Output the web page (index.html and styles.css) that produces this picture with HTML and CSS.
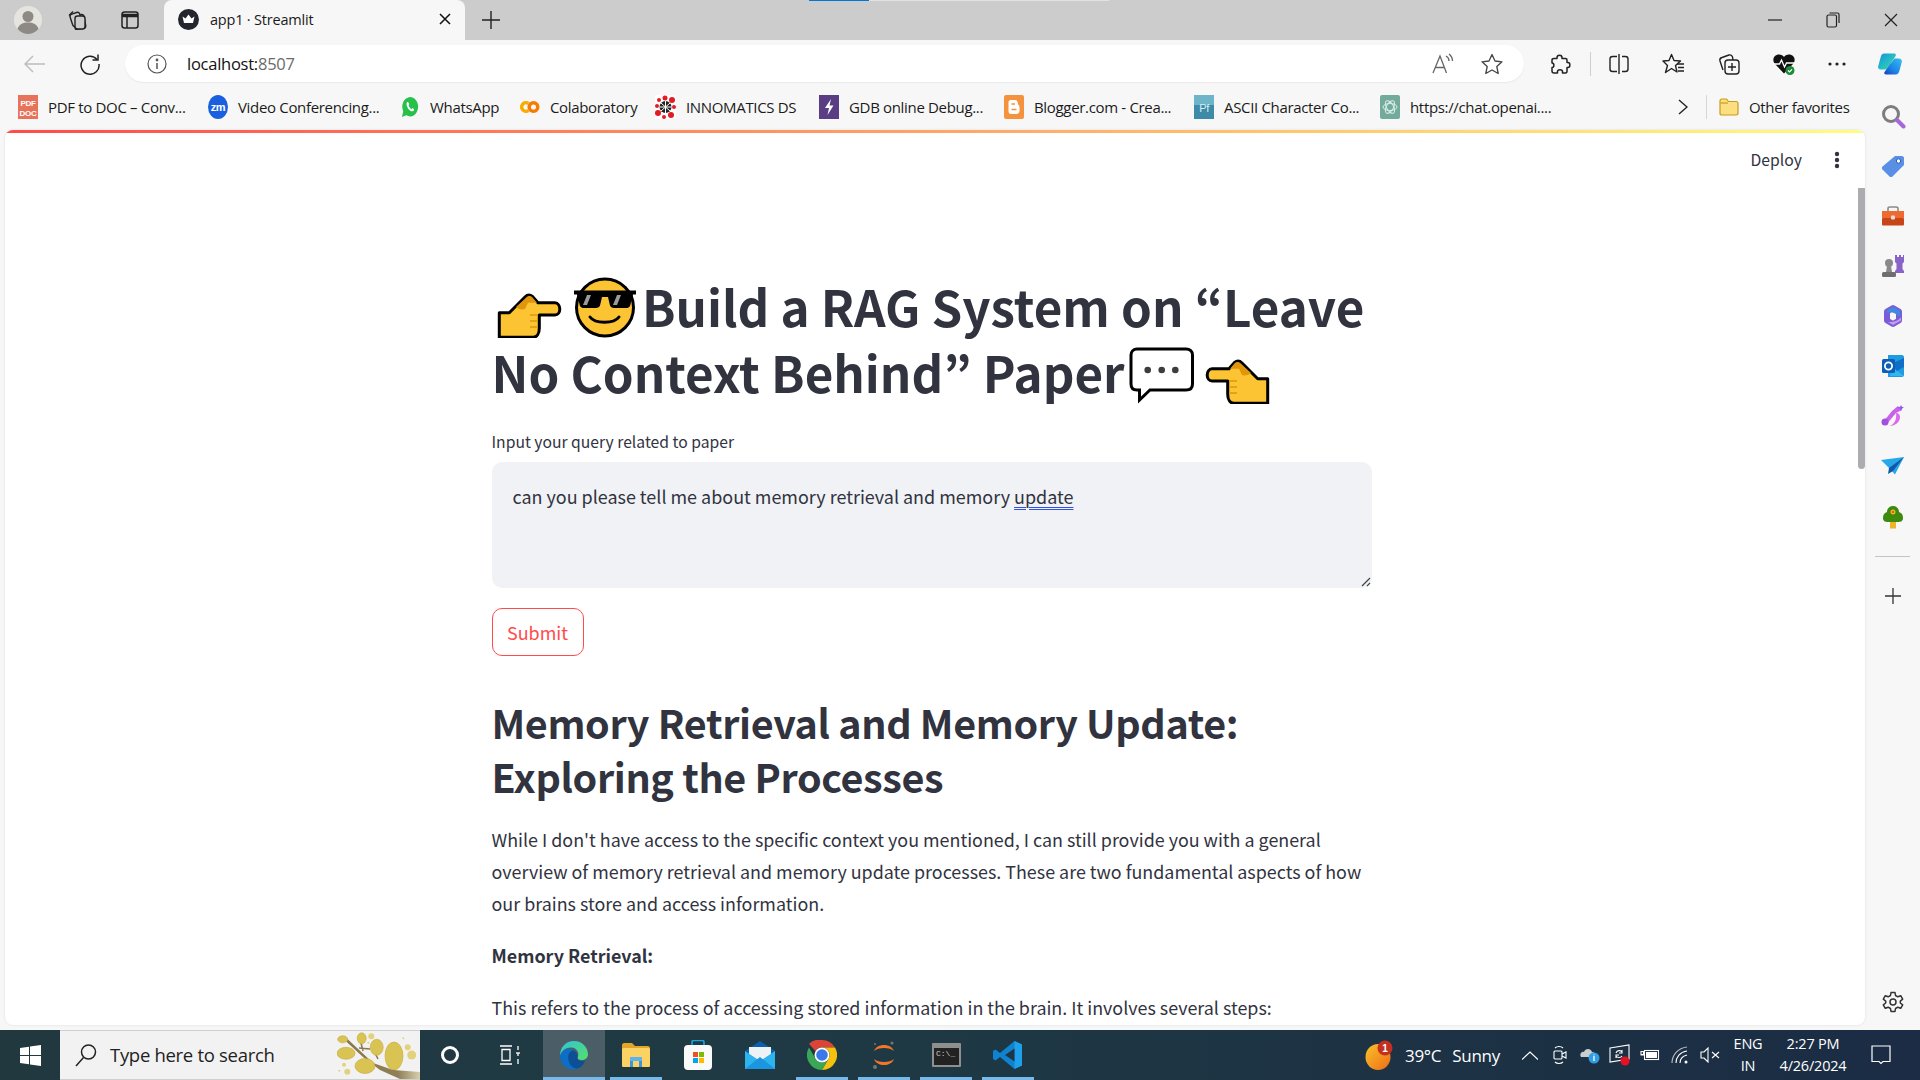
FILE: index.html
```html
<!DOCTYPE html>
<html lang="en">
<head>
<meta charset="utf-8">
<title>app1 · Streamlit</title>
<link rel="stylesheet" href="styles.css">
</head>
<body>
<svg class="defs" width="0" height="0">
  <defs>
    <linearGradient id="copA" x1="0" y1="0" x2="1" y2="1"><stop offset="0" stop-color="#1c8fe0"/><stop offset=".45" stop-color="#20b8c8"/><stop offset="1" stop-color="#48dc98"/></linearGradient>
    <linearGradient id="copB" x1="1" y1="0" x2="0" y2="1"><stop offset="0" stop-color="#38bdf2"/><stop offset=".6" stop-color="#1a84e6"/><stop offset="1" stop-color="#1a3fc0"/></linearGradient>
    <linearGradient id="edgeA" x1="0" y1="0" x2="1" y2="1"><stop offset="0" stop-color="#34c3d8"/><stop offset="1" stop-color="#54e06a"/></linearGradient>
    <linearGradient id="wthr" x1="0" y1="0" x2="1" y2="1"><stop offset="0" stop-color="#f9c22a"/><stop offset="1" stop-color="#ef6c17"/></linearGradient>
    <linearGradient id="brush" x1="0" y1="0" x2="1" y2="1"><stop offset="0" stop-color="#b25ae8"/><stop offset="1" stop-color="#e26bf0"/></linearGradient>
    <linearGradient id="twig" x1="0" y1="0" x2="1" y2="0"><stop offset="0" stop-color="#8a7648"/><stop offset=".7" stop-color="#8f8058"/><stop offset="1" stop-color="#d6cfae"/></linearGradient>
    <g id="handR">
      <path d="M7.3 61.3V36.7H17.3L33 21C35 19 38 18.500 40.500 20.500L46 26.700H63C66 26.700 67.800 30 67.800 33C67.800 36 66 39 63 39H47.300V52.300C47.300 57.500 45 61.300 41 61.300Z" fill="#fcc332" stroke="#000" stroke-width="3" stroke-linejoin="round"/>
      <path d="M24 31L35 21C37 19.500 39 20 40.500 21.500L45 26.700H36L33 33C30 34 26 33 24 31Z" fill="#e0960c"/>
      <path d="M38 39H46M38 45H46M38 51H45" stroke="#e0960c" stroke-width="1.600" fill="none"/>
    </g>
  </defs>
</svg>

<header class="tabstrip">
  <span class="prof">
    <svg width="28" height="28" viewBox="0 0 28 28"><circle cx="14" cy="14" r="14" fill="#e6e4de"/><circle cx="14" cy="10.500" r="5.500" fill="#8d8a85"/><path d="M3.500 23C5 18 9 16.500 14 16.500S23 18 24.500 23C21.500 26.500 18 28 14 28S6.500 26.500 3.500 23Z" fill="#8d8a85"/></svg>
  </span>
  <span class="strip-btn">
    <svg width="22" height="22" viewBox="0 0 22 22" fill="none" stroke="#222" stroke-width="1.400"><rect x="8" y="6" width="11" height="14" rx="2.500" transform="rotate(-10 13 13)" fill="#ccc"/><rect x="5" y="4" width="10" height="13" rx="2.500" transform="rotate(-18 10 10)" fill="#ccc"/><path d="M3 6.500L7 2.500" /><rect x="9" y="7" width="10" height="13" rx="2.500" fill="#ccc"/></svg>
  </span>
  <span class="strip-btn">
    <svg width="20" height="20" viewBox="0 0 20 20" fill="none" stroke="#222" stroke-width="1.500"><rect x="2" y="2" width="16" height="16" rx="2.500"/><path d="M2 5.500H18" stroke-width="3.500"/><path d="M7 6V18"/></svg>
  </span>
  <div class="tab">
    <svg class="fav" width="21" height="21" viewBox="0 0 21 21"><circle cx="10.500" cy="10.500" r="10.500" fill="#23252f"/><path d="M4.500 7.500L7.500 9.500L10.500 5.500L13.500 9.500L16.500 7.500L15 14H6Z" fill="#fff"/></svg>
    <span class="tab-title">app1 · Streamlit</span>
    <svg class="tab-x" width="12" height="12" viewBox="0 0 12 12" stroke="#111" stroke-width="1.500"><path d="M1 1L11 11M11 1L1 11"/></svg>
  </div>
  <span class="newtab">
    <svg width="18" height="18" viewBox="0 0 18 18" stroke="#222" stroke-width="1.400"><path d="M9 0V18M0 9H18"/></svg>
  </span>
  <div class="loadbar"><i class="load-a"></i><i class="load-b"></i></div>
  <div class="winbtns">
    <svg width="14" height="14" viewBox="0 0 14 14" stroke="#222" stroke-width="1.200"><path d="M0 7H14"/></svg>
    <svg width="14" height="16" viewBox="0 0 14 16" fill="none" stroke="#222" stroke-width="1.200"><rect x="1" y="3" width="9.500" height="12" rx="1.500"/><path d="M3.500 1H11.500C12.500 1 13 1.500 13 2.500V11"/></svg>
    <svg width="14" height="14" viewBox="0 0 14 14" stroke="#222" stroke-width="1.200"><path d="M1 1L13 13M13 1L1 13"/></svg>
  </div>
</header>

<nav class="toolbar">
  <span class="tb">
    <svg width="22" height="18" viewBox="0 0 22 18" fill="none" stroke="#bdbdbd" stroke-width="1.500"><path d="M21 9H1M9 1L1 9L9 17"/></svg>
  </span>
  <span class="tb">
    <svg width="22" height="22" viewBox="0 0 22 22" fill="none" stroke="#222" stroke-width="1.500"><path d="M18 6.500A9 9 0 1 0 20 11"/><path d="M19 1.500V7H13.500"/></svg>
  </span>
  <div class="addr">
    <svg width="20" height="20" viewBox="0 0 20 20" fill="none" stroke="#555" stroke-width="1.200"><circle cx="10" cy="10" r="9"/><path d="M10 9V15" stroke-width="1.500"/><circle cx="10" cy="6" r=".8" fill="#555"/></svg>
    <span class="url"><b class="host">localhost:</b>8507</span>
    <svg class="read" width="24" height="22" viewBox="0 0 24 22" fill="none" stroke="#666" stroke-width="1.300"><path d="M1 20L8 3L14.500 20M3.500 14.500H12.500"/><path d="M14 3C16 4 17 6 17 8M17 1C19.500 3 20.500 5 20.500 8"/></svg>
    <svg class="star" width="22" height="22" viewBox="0 0 22 22" fill="none" stroke="#444" stroke-width="1.300" stroke-linejoin="round"><path d="M11 1.500L14 8L21 8.800L15.800 13.500L17.200 20.500L11 17L4.800 20.500L6.200 13.500L1 8.800L8 8Z"/></svg>
  </div>
  <div class="tools">
    <span class="ti">
      <svg width="22" height="22" viewBox="0 0 22 22" fill="none" stroke="#222" stroke-width="1.500" stroke-linejoin="round"><path d="M8 4.500C8 1.500 13 1.500 13 4.500V5.500H16.500C17.500 5.500 18 6 18 7V9.500H19C21.500 9.500 21.500 14.500 19 14.500H18V18C18 19 17.500 20 16.500 20H13.500V18.500C13.500 16 8.500 16 8.500 18.500V20H5C3.500 20 3 19 3 18V14.500C5.500 14.500 5.500 10 3 10V7C3 6 3.500 5.500 5 5.500H8Z"/></svg>
    </span>
    <i class="vsep"></i>
    <span class="ti">
      <svg width="22" height="22" viewBox="0 0 22 22" fill="none" stroke="#222" stroke-width="1.400"><path d="M9 3.500H4.500C3 3.500 2 4.500 2 6V16C2 17.500 3 18.500 4.500 18.500H9M14 3.500H17.500C19 3.500 20 4.500 20 6V16C20 17.500 19 18.500 17.500 18.500H14M11 1V21"/></svg>
    </span>
    <span class="ti">
      <svg width="24" height="22" viewBox="0 0 24 22" fill="none" stroke="#222" stroke-width="1.400" stroke-linejoin="round"><path d="M9.500 1.500L12 7.500L18.500 8L13.500 12.500L15 19L9.500 15.500L3.500 19.500L5.500 12.500L1 8L7 7.500Z"/><path d="M15 11H22M16 14.500H22M16 18H22"/></svg>
    </span>
    <span class="ti">
      <svg width="24" height="24" viewBox="0 0 24 24" fill="none" stroke="#222" stroke-width="1.400"><path d="M6 18L3 9C2.500 7 3 6 5 5.500L12 3C14 2.500 15 3 15.500 5L16 8"/><rect x="8" y="8" width="14" height="14" rx="3"/><path d="M15 11V19M11 15H19"/></svg>
    </span>
    <span class="ti">
      <svg width="24" height="24" viewBox="0 0 24 24"><path d="M12 21.500L3 12C-.500 8 2 2.500 7 2.500C9.500 2.500 11 3.500 12 5C13 3.500 14.500 2.500 17 2.500C22 2.500 24.500 8 21 12Z" fill="#111"/><path d="M1 12H7.500L9.500 8L12.500 15L14.500 11H23" fill="none" stroke="#fff" stroke-width="1.300"/><circle cx="18" cy="18.500" r="4.500" fill="#1d8a3a"/><path d="M16 18.500L17.500 20L20 17.300" stroke="#fff" fill="none" stroke-width="1.200"/></svg>
    </span>
    <span class="ti ti-tight">
      <svg width="20" height="4" viewBox="0 0 20 4" fill="#222"><circle cx="3" cy="2" r="1.600"/><circle cx="10" cy="2" r="1.600"/><circle cx="17" cy="2" r="1.600"/></svg>
    </span>
    <span class="ti ti-tight">
      <svg width="30" height="28" viewBox="0 0 30 28"><path d="M7.500 1H20C22 1 22.800 2.300 22 4L15.500 14C13.500 17 11.500 20 9.500 21H3C.7 21 -.3 19 .3 16.500L3.300 5.500C4 2.500 5.500 1 7.500 1Z" fill="url(#copA)"/><path d="M26 7C28.500 7 30.300 9 29.700 11.500L26.800 22.500C26 25.500 24.500 27 22.500 27H10C8 27 7.200 25.500 8.200 24L14.500 15C17 12 19 9 20.500 7Z" fill="url(#copB)"/></svg>
    </span>
  </div>
</nav>

<nav class="bookmarks">
  <a class="bm"><svg width="20" height="24" viewBox="0 0 20 24"><rect width="20" height="24" fill="#e8735a"/><text x="10" y="10.500" class="ico-t">PDF</text><text x="10" y="20.500" class="ico-t">DOC</text></svg><span>PDF to DOC – Conv...</span></a>
  <a class="bm"><svg width="20" height="24" viewBox="0 0 20 24"><ellipse cx="10" cy="12" rx="10" ry="12" fill="#1a5fe0"/><text x="10" y="15.500" class="ico-z">zm</text></svg><span>Video Conferencing...</span></a>
  <a class="bm bm-wa"><svg width="18" height="22" viewBox="0 0 20 20" preserveAspectRatio="none"><path d="M1 19L2.500 14A8.800 8.800 0 1 1 6 17.500Z" fill="#27c04a"/><path d="M7 5.500C5.500 6.500 6 9 8 11.500C10 13.500 12.500 14.500 14 13.500C15 12.500 14.500 12 13 11C12.500 11 12 12 11.500 12C10.500 11.500 8.500 9.500 8.500 8.500C8.500 8 9.500 7.500 9 7C8 5.500 7.800 5.200 7 5.500Z" fill="#fff"/></svg><span>WhatsApp</span></a>
  <a class="bm"><svg width="20" height="20" viewBox="0 0 20 20" fill="none" stroke-width="3.500"><path d="M8.500 6.500A4.300 4.300 0 1 0 8.500 13.500" stroke="#f9ab00"/><circle cx="13.500" cy="10" r="4.300" stroke="#f57c00"/></svg><span>Colaboratory</span></a>
  <a class="bm"><svg width="21" height="24" viewBox="0 0 21 24"><rect width="21" height="24" fill="#fff"/><g fill="#e31b23"><circle cx="10" cy="3" r="2.500"/><circle cx="17" cy="5" r="3"/><circle cx="19" cy="12" r="2"/><circle cx="16" cy="20" r="3"/><circle cx="9" cy="22" r="2"/><circle cx="3" cy="18" r="3"/><circle cx="2" cy="11" r="2"/><circle cx="4" cy="5" r="2"/></g><circle cx="10.500" cy="12" r="6" fill="#222"/><path d="M10.500 6V18M4.500 12H16.500M6 8L15 16M15 8L6 16" stroke="#fff" stroke-width="1"/></svg><span>INNOMATICS DS</span></a>
  <a class="bm"><svg width="20" height="24" viewBox="0 0 20 24"><rect width="20" height="24" fill="#5a3d82"/><path d="M12 4L6 13H10L8.500 20L14.500 10.500H10.500Z" fill="#fff"/></svg><span>GDB online Debug...</span></a>
  <a class="bm"><svg width="20" height="24" viewBox="0 0 20 24"><rect width="20" height="24" rx="2" fill="#f5923e"/><path d="M6.500 5H11C13 5 14 6.500 14 9.500C15 10 15.500 11 15.500 12.500V16C15.500 18 14 19 12.500 19H7C5.500 19 4.500 18 4.500 16V7C4.500 6 5.500 5 6.500 5Z" fill="#fff"/><path d="M7.500 9H11M7.500 14.500H12.500" stroke="#f5923e" stroke-width="1.600"/></svg><span>Blogger.com - Crea...</span></a>
  <a class="bm"><svg width="20" height="24" viewBox="0 0 20 24"><rect width="20" height="24" fill="#3d8ba8"/><rect width="20" height="10" fill="#6fb5c9"/><text x="10" y="17" class="ico-p">Pf</text></svg><span>ASCII Character Co...</span></a>
  <a class="bm"><svg width="20" height="24" viewBox="0 0 20 24" fill="none" stroke="#d9eee6" stroke-width="1"><rect width="20" height="24" rx="2" fill="#74aa9c" stroke="none"/><ellipse cx="10" cy="12" rx="7" ry="3.500"/><ellipse cx="10" cy="12" rx="7" ry="3.500" transform="rotate(60 10 12)"/><ellipse cx="10" cy="12" rx="7" ry="3.500" transform="rotate(120 10 12)"/></svg><span>https://chat.openai....</span></a>
  <span class="bm-more"><svg width="10" height="16" viewBox="0 0 10 16" fill="none" stroke="#222" stroke-width="1.400"><path d="M1 1L9 8L1 15"/></svg></span>
  <i class="bm-sep"></i>
  <a class="bm bm-folder"><svg width="20" height="18" viewBox="0 0 20 18"><path d="M1 3C1 2 1.500 1 3 1H7.500L9.500 3.500H17C18.500 3.500 19 4.500 19 5.500V15.500C19 16.500 18.500 17 17 17H3C1.500 17 1 16.500 1 15.500Z" fill="#fcdf80" stroke="#c99a1c" stroke-width="1.200"/><path d="M1.500 5H9" stroke="#c99a1c" stroke-width="1.200"/></svg><span>Other favorites</span></a>
</nav>

<div class="middle">
  <div class="viewport">
    <div class="decoration"></div>
    <div class="view-body">
      <main class="app">
        <div class="app-head">
          <span class="deploy">Deploy</span>
          <svg class="kebab" width="6" height="18" viewBox="0 0 6 18" fill="#31333f"><circle cx="3" cy="3" r="2.200"/><circle cx="3" cy="9" r="2.200"/><circle cx="3" cy="15" r="2.200"/></svg>
        </div>
        <div class="block">
          <h1><svg class="emoji" viewBox="0 0 77 62"><use href="#handR"/></svg><svg class="emoji emoji-lead" viewBox="0 0 77 62"><circle cx="36" cy="31.500" r="28.500" fill="#fcc332" stroke="#000" stroke-width="3"/><path d="M5 14.500H67V18.500H64L61 30C60 31.500 59 32 57 32H45C43 32 41.500 31 41 29.500L39 21H33L31 29.500C30.500 31 29 32 27 32H15C13 32 12 31.500 11 30L8 18.500H5Z" fill="#000"/><path d="M18 19L14 29H18L22 19ZM48 19L44 29H48L52 19Z" fill="#9b9b9b"/><path d="M21 41C26 48 45 48 50 41" fill="none" stroke="#000" stroke-width="3" stroke-linecap="round"/></svg>Build a RAG System on “Leave No Context Behind” Paper<svg class="emoji emoji-trail" viewBox="0 0 77 62"><path d="M14 7H63C67 7 69.500 9.500 69.500 13V42C69.500 46 67 48 63 48H27L16.500 58V48H14C10.500 48 8 46 8 42V13C8 9.500 10.500 7 14 7Z" fill="#fff" stroke="#000" stroke-width="3"/><circle cx="24.700" cy="28" r="3.300" fill="#3d3d3d"/><circle cx="38.700" cy="28" r="3.300" fill="#3d3d3d"/><circle cx="52.300" cy="28" r="3.300" fill="#3d3d3d"/></svg><svg class="emoji" viewBox="0 0 77 62"><use href="#handR" transform="translate(75 0) scale(-1 1)"/></svg></h1>
          <label class="field-label">Input your query related to paper</label>
          <div class="textarea">
            <p class="ta-text">can you please tell me about memory retrieval and memory <span class="grammar">update</span></p>
            <svg class="grip" width="10" height="10" viewBox="0 0 10 10" stroke="#444" stroke-width="1.200"><path d="M9 1L1 9M9 6L6 9"/></svg>
          </div>
          <button class="submit" type="button">Submit</button>
          <h2>Memory Retrieval and Memory Update: Exploring the Processes</h2>
          <p class="para">While I don't have access to the specific context you mentioned, I can still provide you with a general overview of memory retrieval and memory update processes. These are two fundamental aspects of how our brains store and access information.</p>
          <p class="para"><strong>Memory Retrieval:</strong></p>
          <p class="para">This refers to the process of accessing stored information in the brain. It involves several steps:</p>
        </div>
      </main>
      <div class="scroll-track"><div class="scroll-thumb"></div></div>
    </div>
  </div>

  <aside class="sidebar">
    <span class="si"><svg width="26" height="26" viewBox="0 0 26 26" fill="none"><circle cx="11" cy="11" r="7.500" stroke="#7d7d7d" stroke-width="3"/><path d="M17 17L23.500 23.500" stroke="#a668d8" stroke-width="4" stroke-linecap="round"/></svg></span>
    <span class="si"><svg width="24" height="24" viewBox="0 0 24 24"><path d="M14 2H21C22 2 23 3 23 4V11L11.500 22.500C10.500 23.300 9.500 23.300 8.500 22.500L1.500 15.500C.7 14.500 .7 13.500 1.500 12.500Z" fill="#5a8fe6"/><circle cx="17.500" cy="7" r="2.200" fill="#fff" stroke="#2c5cb0" stroke-width="1"/></svg></span>
    <span class="si"><svg width="24" height="20" viewBox="0 0 24 20"><path d="M7 5V2.500C7 1.500 8 1 9 1H15C16 1 17 1.500 17 2.500V5" fill="none" stroke="#8a8a8a" stroke-width="1.600"/><rect x="1" y="5" width="22" height="7" fill="#ee6a30"/><rect x="1" y="12" width="22" height="7.500" rx="1" fill="#c8451a"/><rect x="10" y="9.500" width="4" height="4" rx="1" fill="#ddd"/></svg></span>
    <span class="si"><svg width="24" height="24" viewBox="0 0 24 24"><circle cx="8" cy="9" r="4" fill="#8a8a8a"/><path d="M6 12H10L11 18H5Z" fill="#8a8a8a"/><rect x="1" y="18" width="14" height="5" rx="1.500" fill="#6f6f6f"/><path d="M14 1H16V3H18V1H20V3H22V1H23V8L21.500 9.500V15L23 17V19H14V17L15.500 15V9.500L14 8Z" fill="#8a63c8"/></svg></span>
    <span class="si"><svg width="24" height="24" viewBox="0 0 24 24" fill="none"><path d="M12 4L18 7.500V16.500L12 20L6 16.500V7.500Z" stroke="#7a5cd6" stroke-width="6" stroke-linejoin="round"/><path d="M6 6L12 3L19 7L19.500 13L14 9.500C11 8 8 8 5.500 9Z" fill="#3f8ae0"/><path d="M20 13.500V16.500L12 21L7 18C12 18.500 17 17 20 13.500Z" fill="#c99af0"/></svg></span>
    <span class="si"><svg width="24" height="24" viewBox="0 0 24 24"><path d="M7 1H21C22 1 23 2 23 3V21C23 22 22 23 21 23H7Z" fill="#1f9be0"/><path d="M11 13L23 22H9Z" fill="#33b5ee"/><path d="M10 10L23 4V13L16 17Z" fill="#0f6ec6"/><rect x="1" y="5" width="13" height="14" rx="1.500" fill="#0c5fb8"/><circle cx="7.500" cy="12" r="3.600" fill="none" stroke="#fff" stroke-width="1.800"/></svg></span>
    <span class="si"><svg width="24" height="24" viewBox="0 0 24 24"><path d="M17 2L21 6L15 9L5 21L3 17L11 7Z" fill="url(#brush)"/><path d="M15 9C22 9 20 22 8 22C13 21 16 16 15 9Z" fill="#df68ee"/><circle cx="4" cy="18" r="3.500" fill="#a24fe0"/><path d="M20 1L21 3L23 3.500L21 4.500L20 7L19 4.500L17 3.500L19 3Z" fill="#8e52e6"/></svg></span>
    <span class="si"><svg width="24" height="18" viewBox="0 0 24 18"><path d="M0 3L23 0L14 17.500L8 11Z" fill="#29a7ea"/><path d="M23 0L8 11L7 17L12 14Z" fill="#0f5aa8"/></svg></span>
    <span class="si si-tree"><svg width="20" height="24" viewBox="0 0 20 24"><path d="M10 0C14 0 16 3 16 6C19 7 20 9 20 12C20 15 18 16 15 16H5C2 16 0 15 0 12C0 9 1 7 4 6C4 3 6 0 10 0Z" fill="#3d8a0e"/><rect x="7" y="16" width="6" height="6.500" fill="#f0b429"/><circle cx="10" cy="6" r="2.500" fill="#f0b429"/><circle cx="10" cy="6" r="1" fill="#d5421b"/></svg></span>
    <i class="side-sep"></i>
    <span class="si si-plus"><svg width="16" height="16" viewBox="0 0 16 16" stroke="#333" stroke-width="1.300"><path d="M8 0V16M0 8H16"/></svg></span>
    <span class="si si-gear"><svg width="22" height="22" viewBox="0 0 22 22" fill="none" stroke="#333" stroke-width="1.500" stroke-linejoin="round"><circle cx="11" cy="11" r="3"/><path d="M9 1.500H13L13.500 4.500L15.800 5.800L18.700 4.700L20.700 8.200L18.300 10.100V12L20.700 13.800L18.700 17.300L15.800 16.200L13.500 17.500L13 20.500H9L8.500 17.500L6.200 16.200L3.300 17.300L1.300 13.800L3.700 12V10.100L1.300 8.200L3.300 4.700L6.200 5.800L8.500 4.500Z"/></svg></span>
  </aside>
</div>

<footer class="taskbar">
  <span class="start"><svg width="21" height="21" viewBox="0 0 21 21" fill="#fff"><path d="M0 3L9 1.700V10H0ZM10 1.500L21 0V10H10ZM0 11H9V19.300L0 18ZM10 11H21V21L10 19.500Z"/></svg></span>
  <div class="search">
    <svg class="mag" width="22" height="24" viewBox="0 0 22 24" fill="none" stroke="#222" stroke-width="1.500"><circle cx="13.500" cy="9" r="7"/><path d="M8.500 14.500L1 23"/></svg>
    <span class="search-text">Type here to search</span>
    <svg class="tree" width="83" height="48" viewBox="0 0 83 48"><path d="M9.700 7.300L36 32L56 39L83 41V48H63L43 39L26 26L9.700 11Z" fill="url(#twig)"/><path d="M22 17L33 18M24 12L26 20M38 22L41 28M55 36L57 40" stroke="#8a7648" stroke-width="1.500"/><g fill="#d9c352" stroke="#c4a93a" stroke-width=".6"><ellipse cx="5.700" cy="8.300" rx="5" ry="3.500"/><ellipse cx="24.700" cy="7.300" rx="4.500" ry="5.500"/><ellipse cx="9" cy="22.300" rx="9" ry="6"/><ellipse cx="39.700" cy="16.300" rx="6.500" ry="8"/><ellipse cx="57" cy="25" rx="9" ry="14"/><ellipse cx="28" cy="35" rx="10" ry="7.500"/></g><g fill="#e2d27e"><circle cx="34.300" cy="5.300" r="3"/><circle cx="70.700" cy="16.300" r="3"/><circle cx="74.700" cy="24" r="4.500"/><circle cx="7" cy="33.700" r="2"/><circle cx="10.300" cy="40.700" r="3"/><circle cx="2.300" cy="39.700" r="1"/><circle cx="66.300" cy="7.300" r="1"/><circle cx="31.300" cy="11.700" r="1"/></g></svg>
  </div>
  <span class="tk-cortana"><svg width="20" height="20" viewBox="0 0 20 20" fill="none" stroke="#fff" stroke-width="3"><circle cx="10" cy="10" r="7.500"/></svg></span>
  <span class="tk-view"><svg width="24" height="20" viewBox="0 0 24 20" fill="none" stroke="#fff" stroke-width="1.300"><path d="M1 1H13M1 19H13M3 4.500H11V15.500H3ZM19 1V5M19 8V11M19 14V19"/><path d="M17 8H21" stroke-width="1.300"/></svg></span>
  <div class="apps">
    <span class="app-cell is-active"><svg width="30" height="30" viewBox="0 0 30 30"><path d="M1 16C1 7 7 1 15 1C23 1 29 7 29 14.500C29 18 26 20 22.500 20C20 20 18.500 19 18.500 17.500C21 14 18 7 11.500 7.500C6 8 2.500 11 1 16Z" fill="url(#edgeA)"/><path d="M1 16C3 9 11 7 15 10.500C10 11 8.500 15 9.500 20C10.500 25 15 28.500 21 28C17 30 9 30.500 4.500 25C2 22 1 19 1 16Z" fill="#0b6ec8"/><path d="M15 10.500C18 12.500 19 15 18.500 17.500C18 20.500 21 22 26 20.500C25 24 23 27 19 28.500C14 29 10.500 25 9.500 20C8.500 15 10 11 15 10.500Z" fill="#0d4f96"/></svg></span>
    <span class="app-cell is-open"><svg width="28" height="24" viewBox="0 0 28 24"><path d="M0 2C0 1 1 0 2 0H10L13 3H26C27 3 28 4 28 5V22C28 23 27 24 26 24H2C1 24 0 23 0 22Z" fill="#e0a52a"/><rect y="5" width="28" height="19" rx="1.500" fill="#fbd364"/><path d="M8 24V14H20V24H17V18H11V24Z" fill="#3f93d6"/><path d="M8 14H20V18H8Z" fill="#60b2ec"/></svg></span>
    <span class="app-cell"><svg width="28" height="30" viewBox="0 0 28 30"><path d="M8 6V2C8 1 9 .5 10 .5H18C19 .5 20 1 20 2V6" fill="none" stroke="#15a7e0" stroke-width="1.600"/><rect y="5" width="28" height="25" rx="4" fill="#fafafa"/><rect x="9" y="12" width="5" height="5" fill="#f25022"/><rect x="15" y="12" width="5" height="5" fill="#7fba00"/><rect x="9" y="18" width="5" height="5" fill="#00a4ef"/><rect x="15" y="18" width="5" height="5" fill="#ffb900"/></svg></span>
    <span class="app-cell"><svg width="30" height="28" viewBox="0 0 30 28"><path d="M0 10L15 0L30 10V28H0Z" fill="#0a5fb0"/><path d="M4 6H26V18H4Z" fill="#eef2f4"/><path d="M0 10L15 20L30 10V28H0Z" fill="#2db4ee"/><path d="M0 28L15 16L30 28Z" fill="#1b95e0"/></svg></span>
    <span class="app-cell"><svg width="30" height="30" viewBox="0 0 30 30"><path d="M15 0A15 15 0 0 1 28 7.500H15A7.500 7.500 0 0 0 8.500 11.300L2 3.800A15 15 0 0 1 15 0Z" fill="#db4437"/><path d="M28 7.500A15 15 0 0 1 15 30L21.500 18.800A7.500 7.500 0 0 0 15 7.500Z" fill="#f4c20d"/><path d="M15 30A15 15 0 0 1 2 7.500L8.500 18.800A7.500 7.500 0 0 0 21.500 18.800Z" fill="#3aa757"/><circle cx="15" cy="15" r="7.500" fill="#fff"/><circle cx="15" cy="15" r="5.800" fill="#3b78e7"/></svg></span>
    <span class="app-cell"><svg width="24" height="30" viewBox="0 0 24 30"><path d="M2 11C5 3 19 3 22 11C18 7 6 7 2 11ZM2 19C6 23 18 23 22 19C19 27 5 27 2 19Z" fill="#f37726"/><circle cx="20" cy="3" r="1.500" fill="#767677"/><circle cx="3" cy="27" r="2" fill="#767677"/><circle cx="3" cy="4" r="1" fill="#767677"/></svg></span>
    <span class="app-cell"><svg width="29" height="24" viewBox="0 0 29 24"><rect width="29" height="24" rx="1" fill="#8f8f8f"/><rect x="2" y="5" width="25" height="17" fill="#222"/><text x="4" y="13" class="ico-c">C:\_</text></svg></span>
    <span class="app-cell"><svg width="30" height="30" viewBox="0 0 30 30"><path d="M21.500 1L29 4.500V25.500L21.500 29L7 17L2.500 20.500L0 19V11L2.500 9.500L7 13Z" fill="#0f82d0"/><path d="M21.500 1L29 4.500V25.500L21.500 29Z" fill="#1fa0ea"/><path d="M21.500 8.500V21.500L12 15Z" fill="#1f3642"/></svg></span>
  </div>
  <div class="tray">
    <svg class="wx" width="28" height="30" viewBox="0 0 28 30"><ellipse cx="13" cy="17" rx="12.500" ry="13" fill="url(#wthr)"/><circle cx="20" cy="8" r="7.500" fill="#c4301f"/><text x="20" y="11.500" class="ico-b">1</text></svg>
    <span class="wx-text"><span>39°C</span><span>Sunny</span></span>
    <span class="tr"><svg width="16" height="9" viewBox="0 0 16 9" fill="none" stroke="#fff" stroke-width="1.200"><path d="M0 8.500L8 1L16 8.500"/></svg></span>
    <span class="tr"><svg width="14" height="20" viewBox="0 0 14 20" fill="none" stroke="#fff" stroke-width="1.100"><rect x="1" y="6" width="8" height="8" rx="1"/><path d="M9 9L13 7V13L9 11M2 3C4 1 8 1 10 3M2 17C4 19 8 19 10 17"/></svg></span>
    <span class="tr"><svg width="22" height="18" viewBox="0 0 22 18"><path d="M2 11C0 8 3 5 5 6C6 2 12 2 13 6C16 6 17 9 15 11Z" fill="#c8cdd2"/><circle cx="15" cy="12" r="5.500" fill="#2f9ee5"/><path d="M15 10V15M15 8.500V9.300" stroke="#fff" stroke-width="1.300"/></svg></span>
    <span class="tr"><svg width="22" height="22" viewBox="0 0 22 22" fill="none" stroke="#fff" stroke-width="1.100"><path d="M1 4L20 1V15L1 18Z"/><path d="M7 9C8 6 12 6 13 8M13 12C12 14 8 14 7 12M13 6V9H10M7 14V11H10"/><circle cx="16" cy="17" r="4.500" fill="#e81123" stroke="none"/></svg></span>
    <span class="tr"><svg width="20" height="14" viewBox="0 0 20 14" fill="none" stroke="#fff" stroke-width="1.100"><rect x="4.500" y="2.500" width="14" height="9"/><rect x="6" y="4" width="11" height="6" fill="#fff" stroke="none"/><path d="M.5 7H4M1 3.500H3.500V6.500H1Z"/></svg></span>
    <span class="tr"><svg width="18" height="18" viewBox="0 0 18 18" fill="none" stroke="#fff" stroke-width="1.100"><path d="M1 17C1 9 7 2 16 1" stroke="#b9c0c6"/><path d="M5 17C5 11 9 6 16 5"/><path d="M9 17C9 13 12 10 16 9"/><circle cx="15" cy="16" r="1.500" fill="#fff" stroke="none"/></svg></span>
    <span class="tr"><svg width="20" height="16" viewBox="0 0 20 16" fill="none" stroke="#fff" stroke-width="1.100"><path d="M1 5H4L8 1V15L4 11H1Z"/><path d="M12 5L19 11M19 5L12 11"/></svg></span>
    <span class="lang"><span>ENG</span><span>IN</span></span>
    <span class="clock"><span>2:27 PM</span><span>4/26/2024</span></span>
    <span class="notif"><svg width="20" height="20" viewBox="0 0 20 20" fill="none" stroke="#fff" stroke-width="1.200"><path d="M1 1H19V16.500H12L10 18.500L8 16.500H1Z"/></svg></span>
  </div>
</footer>
</body>
</html>
```

FILE: styles.css
```css
* { box-sizing: border-box; }
html, body { margin: 0; padding: 0; height: 100%; }
body {
  width: 1920px;
  height: 1080px;
  overflow: hidden;
  display: flex;
  flex-direction: column;
  background: #f7f7f7;
  font-family: "Open Sans", "Noto Sans", sans-serif;
  color: #1b1b1b;
}
.defs { position: absolute; }

/* Tab strip */
.tabstrip {
  position: relative;
  height: 40px;
  flex: none;
  background: #cccccc;
  display: flex;
  align-items: center;
  padding-left: 14px;
}
.prof { width: 28px; height: 28px; display: flex; }
.strip-btn { width: 53px; display: flex; justify-content: center; }
.strip-btn:nth-child(2) { margin-left: 8px; }
.tab {
  align-self: stretch;
  margin-left: 8px;
  width: 301px;
  background: #f7f7f7;
  border-radius: 8px 8px 0 0;
  display: flex;
  align-items: center;
  padding: 0 14px 2px 14px;
}
.tab-title { margin-left: 11px; font-size: 14.500px; letter-spacing: -.2px; flex: 1; }
.newtab { margin-left: 17px; display: flex; }
.loadbar { position: absolute; top: 0; left: 809px; height: 1px; display: flex; }
.load-a { width: 60px; height: 1px; background: #0078d4; }
.load-b { width: 240px; height: 1px; background: #e2e2e2; }
.winbtns {
  margin-left: auto;
  display: flex;
  align-items: center;
  gap: 44px;
  padding-right: 22px;
}

/* Toolbar */
.toolbar {
  height: 42px;
  flex: none;
  display: flex;
  align-items: flex-end;
  padding-left: 13px;
  gap: 11px;
}
.tb { flex: none; width: 44px; height: 37px; display: flex; align-items: center; justify-content: center; }
.addr {
  flex: none;
  margin-left: 2px;
  width: 1399px;
  height: 37px;
  background: #fff;
  border-radius: 19px;
  display: flex;
  align-items: center;
  padding: 0 21px 0 22px;
  box-shadow: 0 1px 2px rgba(0,0,0,.06);
}
.url { margin-left: 20px; font-size: 16.500px; color: #6b6b6b; letter-spacing: -.25px; flex: 1; }
.host { font-weight: 400; color: #111; }
.read { margin-right: 25px; }
.tools {
  flex: none;
  margin-left: 13px;
  height: 37px;
  display: flex;
  align-items: center;
  gap: 31px;
}
.ti { flex: none; width: 24px; display: flex; justify-content: center; }
.ti-tight { margin-left: -2px; }
.vsep { flex: none; width: 1px; height: 24px; background: #cfcfcf; margin: 0 -15px 0 -13px; }

/* Bookmarks */
.bookmarks {
  height: 48px;
  flex: none;
  display: grid;
  grid-template-columns: 190px 194px 118px 135px 164px 185px 190px 186px 286px 36px 17px 1fr;
  align-items: center;
  padding: 2px 0 0 18px;
  font-size: 15px;
  letter-spacing: -.33px;
}
.bm { display: flex; align-items: center; gap: 10px; white-space: nowrap; color: #1b1b1b; }
.bm-wa { margin-left: -1px; gap: 11px; }
.bm-more { display: flex; justify-content: center; margin-left: 12px; width: 10px; }
.bm-sep { width: 1px; height: 24px; background: #d5d5d5; margin-left: 4px; }
.ico-t { font: 700 8px "Liberation Sans", sans-serif; fill: #fff; text-anchor: middle; }
.ico-z { font: 700 11px "Liberation Sans", sans-serif; fill: #fff; text-anchor: middle; }
.ico-p { font: 400 11px "Liberation Sans", sans-serif; fill: #d5eef5; text-anchor: middle; }
.ico-c { font: 400 8px "Liberation Mono", monospace; fill: #ccc; }
.ico-b { font: 700 10px "Liberation Sans", sans-serif; fill: #fff; text-anchor: middle; }

/* Middle region */
.middle { flex: 1; min-height: 0; display: flex; }
.viewport {
  margin-left: 5px;
  width: 1860px;
  flex: none;
  margin-bottom: 5px;
  background: #fff;
  border-radius: 8px;
  overflow: hidden;
  display: flex;
  flex-direction: column;
  box-shadow: 0 0 3px rgba(0,0,0,.1);
}
.decoration { height: 3px; flex: none; background: linear-gradient(90deg, #ff4b4b, #fffd80); }
.view-body { flex: 1; min-height: 0; display: flex; }
.app {
  flex: 1;
  min-width: 0;
  overflow: hidden;
  font-family: "Noto Sans CJK JP", "Noto Sans", sans-serif;
  color: #31333f;
}
.app-head {
  height: 52px;
  display: flex;
  align-items: center;
  justify-content: flex-end;
  padding-right: 18px;
  font-size: 15.750px;
}
.kebab { margin-top: 2px; }
.deploy { margin-right: 32px; }
.block { width: 880px; margin: 0 auto; padding-top: 88px; }
h1 {
  margin: 0;
  font-size: 49.300px;
  line-height: 66px;
  font-weight: 700;
  color: #31333f;
}
.emoji { width: 77px; height: 62px; vertical-align: -11px; }
.emoji-lead { margin-right: -3.500px; }
.emoji-trail { margin-left: -2px; }
.field-label { display: block; margin-top: 25px; font-size: 15.700px; line-height: 24px; }
.textarea {
  margin-top: 8px;
  height: 126px;
  background: #f0f2f6;
  border-radius: 10px;
  padding: 20px 20px 20px 21px;
  display: flex;
  flex-direction: column;
}
.ta-text { margin: 0; flex: 1; font-size: 17.950px; line-height: 28px; }
.grammar { text-decoration: underline double #2f52e0; text-underline-offset: 3px; text-decoration-thickness: 1px; }
.grip { align-self: flex-end; margin: 0 -19px -19px 0; }
.submit {
  display: block;
  margin-top: 20px;
  width: 92px;
  height: 48px;
  background: #fff;
  border: 1px solid #ff4b4b;
  border-radius: 10px;
  color: #ff4b4b;
  font: 400 17.950px/28px "Noto Sans CJK JP", sans-serif;
  padding: 0;
}
h2 {
  margin: 39px 0 0;
  font-size: 39.500px;
  line-height: 54px;
  font-weight: 600;
  letter-spacing: -.37px;
  color: #31333f;
}
.para { margin: 20px 0 0; font-size: 17.900px; line-height: 32px; }
.para strong { font-weight: 700; }
.scroll-track { width: 7px; flex: none; }
.scroll-thumb { margin-top: 55px; height: 281px; background: #ababb0; border-radius: 0 0 4px 4px; }

/* Right sidebar */
.sidebar {
  width: 55px;
  flex: none;
  display: flex;
  flex-direction: column;
  align-items: center;
}
.si { height: 50px; display: flex; align-items: center; justify-content: center; }
.sidebar .si:first-child { margin-top: -39px; }
.si-tree { padding-top: 3px; }
.side-sep { width: 35px; height: 1px; background: #c4c4c4; margin-top: 15px; }
.si-plus { margin-top: 14px; }
.si-gear { margin-top: auto; margin-bottom: 3px; }

/* Taskbar */
.taskbar {
  height: 50px;
  flex: none;
  display: flex;
  background: linear-gradient(90deg, #21383f, #1f3a44 40%, #1b2c44);
  color: #fff;
}
.start { width: 60px; display: flex; align-items: center; justify-content: center; }
.search {
  flex: none;
  width: 360px;
  background: #f2f2f2;
  border-top: 1px solid #cfcfcf;
  border-bottom: 1px solid #cfcfcf;
  display: flex;
  align-items: center;
  color: #1f1f1f;
}
.mag { margin-left: 15px; }
.search-text { margin-left: 13px; padding-bottom: 2px; font-size: 18.500px; letter-spacing: -.3px; flex: 1; }
.tree { flex: none; align-self: flex-end; }
.tk-cortana { width: 60px; display: flex; align-items: center; justify-content: center; }
.tk-view { width: 63px; display: flex; align-items: center; padding-left: 19px; }
.apps { display: flex; }
.app-cell {
  position: relative;
  width: 62px;
  display: flex;
  align-items: center;
  justify-content: center;
}
.app-cell::after {
  content: "";
  position: absolute;
  left: 5px;
  right: 5px;
  bottom: 0;
  height: 3px;
  background: #76b9ed;
}
.app-cell:nth-child(3)::after,
.app-cell:nth-child(4)::after { display: none; }
.is-active { background: #4b5e68; }
.is-active::after { left: 0; right: 0; }
.tray { margin-left: auto; flex: none; width: 556px; display: flex; align-items: center; }
.wx { margin-left: 1px; }
.wx-text { margin-left: 12px; width: 110px; display: flex; gap: 11px; font-size: 17px; letter-spacing: -.3px; }
.tr { width: 30px; display: flex; justify-content: center; }
.lang, .clock {
  display: flex;
  flex-direction: column;
  align-items: center;
  gap: 4px;
  font-size: 14.500px;
  line-height: 18px;
  letter-spacing: -.2px;
}
.lang { width: 46px; }
.clock { width: 84px; }
.notif { width: 52px; display: flex; justify-content: center; }
```
